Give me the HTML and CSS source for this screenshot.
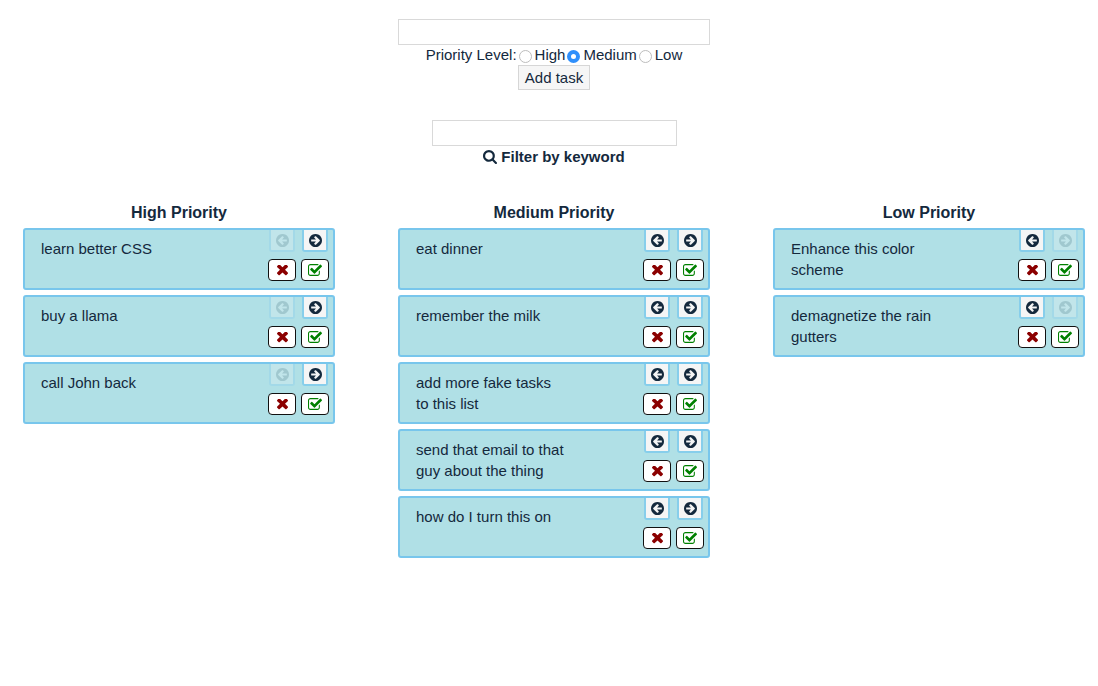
FILE: index.html
```
<!DOCTYPE html>
<html lang="en">
<head>
<meta charset="utf-8">
<title>Tasks</title>
<link rel="stylesheet" href="styles.css">
</head>
<body>
<svg class="sprite" aria-hidden="true">
  <symbol id="arrow" viewBox="0 128 1536 1536"><path d="M1285 896q0-27-18-45l-91-91-362-362q-18-18-45-18t-45 18l-91 91q-18 18-18 45t18 45l189 189h-502q-26 0-45 19t-19 45v128q0 26 19 45t45 19h502l-189 189q-19 19-19 45t19 45l91 91q18 18 45 18t45-18l362-362 91-91q18-18 18-45zM1536 896q0 209-103 385.500t-279.500 279.500-385.500 103-385.500-103-279.500-279.500-103-385.500 103-385.500 279.500-279.500 385.500-103 385.500 103 279.500 279.500 103 385.500z" fill-rule="evenodd"/></symbol>
  <symbol id="times" viewBox="110 434 1188 1188"><path d="M1298 1322q0 40-28 68l-136 136q-28 28-68 28t-68-28l-294-294-294 294q-28 28-68 28t-68-28l-136-136q-28-28-28-68t28-68l294-294-294-294q-28-28-28-68t28-68l136-136q28-28 68-28t68 28l294 294 294-294q28-28 68-28t68 28l136 136q28 28 28 68t-28 68l-294 294 294 294q28 28 28 68z"/></symbol>
  <symbol id="check" viewBox="0 0 1664 1664"><path d="M1408 930v318q0 119-84.500 203.500t-203.500 84.500h-832q-119 0-203.500-84.500t-84.500-203.500v-832q0-119 84.500-203.500t203.500-84.500h832q63 0 117 25 15 7 18 23 3 17-9 29l-49 49q-10 10-23 10-3 0-9-2-23-6-45-6h-832q-66 0-113 47t-47 113v832q0 66 47 113t113 47h832q66 0 113-47t47-113v-254q0-13 9-22l64-64q10-10 23-10 6 0 12 3 20 8 20 29zm231-489l-814 814q-24 24-57 24t-57-24l-430-430q-24-24-24-57t24-57l110-110q24-24 57-24t57 24l263 263 647-647q24-24 57-24t57 24l110 110q24 24 24 57t-24 57z"/></symbol>
  <symbol id="search" viewBox="0 128 1664 1664"><path d="M1152 832q0-185-131.500-316.500t-316.500-131.500-316.500 131.500-131.500 316.500 131.500 316.500 316.500 131.500 316.500-131.500 131.500-316.500zm512 832q0 52-38 90t-90 38q-54 0-90-38l-343-342q-179 124-399 124-143 0-273.500-55.500t-225-150-150-225-55.500-273.500 55.500-273.500 150-225 225-150 273.500-55.500 273.500 55.500 225 150 150 225 55.500 273.500q0 220-124 399l343 343q37 37 37 90z"/></symbol>
</svg>

<form class="new-task">
  <input class="field" type="text" aria-label="New task">
  <div class="levels" role="radiogroup" aria-label="Priority Level">
    <span>Priority Level:</span>
    <label class="level"><input class="radio" type="radio" name="level">High</label>
    <label class="level"><input class="radio" type="radio" name="level" checked>Medium</label>
    <label class="level"><input class="radio" type="radio" name="level">Low</label>
  </div>
  <button class="add" type="button">Add task</button>
</form>

<div class="filter">
  <input class="field filter-field" id="filter" type="text">
  <label class="filter-label" for="filter"><svg class="icon-search" aria-hidden="true"><use href="#search"/></svg>Filter by keyword</label>
</div>

<main class="board">
  <section class="column" data-level="high">
    <h2 class="heading">High Priority</h2>
    <article class="task"><p class="text">learn better CSS</p></article>
    <article class="task"><p class="text">buy a llama</p></article>
    <article class="task"><p class="text">call John back</p></article>
  </section>
  <section class="column" data-level="medium">
    <h2 class="heading">Medium Priority</h2>
    <article class="task"><p class="text">eat dinner</p></article>
    <article class="task"><p class="text">remember the milk</p></article>
    <article class="task"><p class="text">add more fake tasks to this list</p></article>
    <article class="task"><p class="text">send that email to that guy about the thing</p></article>
    <article class="task"><p class="text">how do I turn this on</p></article>
  </section>
  <section class="column" data-level="low">
    <h2 class="heading">Low Priority</h2>
    <article class="task"><p class="text">Enhance this color scheme</p></article>
    <article class="task"><p class="text">demagnetize the rain gutters</p></article>
  </section>
</main>

<template id="actions">
  <div class="actions">
    <button class="move move-left" type="button" aria-label="Raise priority"><svg class="icon flip" aria-hidden="true"><use href="#arrow"/></svg></button>
    <button class="move move-right" type="button" aria-label="Lower priority"><svg class="icon" aria-hidden="true"><use href="#arrow"/></svg></button>
    <button class="act remove" type="button" aria-label="Delete"><svg class="icon icon-times" aria-hidden="true"><use href="#times"/></svg></button>
    <button class="act done" type="button" aria-label="Complete"><svg class="icon icon-check" aria-hidden="true"><use href="#check"/></svg></button>
  </div>
</template>
<script src="tasks.js"></script>
</body>
</html>
```
FILE: styles.css
```
* { box-sizing: border-box; }

body {
  margin: 0;
  padding: 19px 13px 18px 23px;
  background: #fff;
  color: #14293d;
  font: 15px/20px "Liberation Sans", Arial, sans-serif;
}

.sprite { display: none; }

input, button { font: inherit; color: inherit; margin: 0; }

.new-task, .filter {
  display: flex;
  flex-direction: column;
  align-items: center;
}

.field {
  width: 312px;
  max-width: 100%;
  height: 26px;
  padding: 2px 6px;
  border: 1px solid #d9d9d9;
  background: #fff;
}

.levels { display: flex; gap: 2px; }
.level { display: flex; align-items: center; gap: 3px; }

.radio {
  appearance: none;
  width: 13px;
  height: 13px;
  margin-top: 2px;
  border: 1px solid #bdbdbd;
  border-radius: 50%;
  background: #fff;
}

.radio:checked {
  border: 4px solid #2f8ffb;
}

.add {
  height: 25px;
  padding: 0 6px;
  border: 1px solid #d6d6d6;
  background: #f6f6f6;
}

.filter { padding-top: 30px; }
.filter-field { width: 245px; }

.filter-label {
  display: flex;
  align-items: center;
  gap: 4px;
  padding-top: 1px;
  font-weight: bold;
}

.icon-search { width: 14px; height: 14px; fill: currentColor; }

.board {
  display: grid;
  grid-template-columns: repeat(3, 1fr);
  gap: 63px;
  padding-top: 36px;
}

.column {
  display: flex;
  flex-direction: column;
  gap: 5px;
}

.heading {
  margin: 0;
  font-size: 16px;
  line-height: 20px;
  text-align: center;
}

.task {
  display: flex;
  justify-content: space-between;
  align-items: flex-start;
  padding: 0 4px 0 16px;
  border: 2px solid #78c6ec;
  border-radius: 3px;
  background: #b0e0e6;
}

.text {
  max-width: 150px;
  margin: 0;
  padding: 8px 0;
  line-height: 21px;
}

.actions {
  display: grid;
  grid-template-columns: 28px 28px;
  grid-auto-rows: 22px;
  gap: 7px 5px;
  justify-items: center;
  padding-bottom: 7px;
}

.move, .act {
  display: flex;
  align-items: center;
  justify-content: center;
  height: 22px;
  padding: 0;
}

.move {
  width: 26px;
  border: 2px solid #87ceeb;
  border-top: 0;
  border-radius: 0 0 3px 3px;
  background: #f5f5f5;
}

.move:disabled {
  border-color: #a3d9e8;
  background: #c1e5ea;
  color: #a0c8cf;
}

.act {
  width: 28px;
  border: 1px solid #111;
  border-radius: 4px;
  background: #fff;
}

.icon { width: 13px; height: 13px; fill: currentColor; }
.flip { transform: scaleX(-1); }
.icon-times { width: 11px; height: 11px; }
.icon-check { width: 14px; height: 14px; }
.remove { color: #8b0000; }
.done { color: #008000; }
```
FILE: tasks.js
```
const actions = document.getElementById("actions");

document.querySelectorAll(".task").forEach((task) => {
  task.append(actions.content.cloneNode(true));
  const level = task.closest(".column").dataset.level;
  task.querySelector(".move-left").disabled = level === "high";
  task.querySelector(".move-right").disabled = level === "low";
});
```
